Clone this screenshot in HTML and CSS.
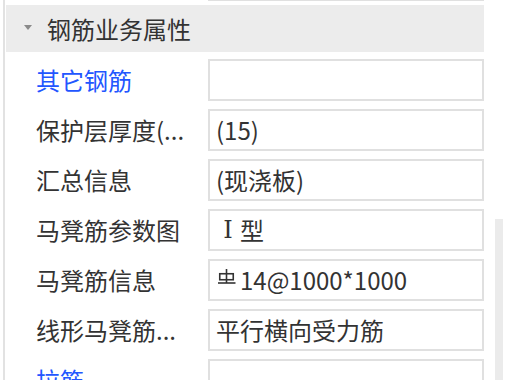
FILE: index.html
```html
<!DOCTYPE html>
<html lang="zh">
<head>
<meta charset="utf-8">
<link rel="stylesheet" href="styles.css">
</head>
<body>
<div class="frame">
  <div class="panel">
    <div class="list">
      <div class="row"><div class="label"></div><div class="field"></div></div>
      <div class="group"><span class="caret"></span><span class="group-title">钢筋业务属性</span></div>
      <div class="row"><div class="label blue">其它钢筋</div><div class="field"></div></div>
      <div class="row"><div class="label">保护层厚度(...</div><div class="field">(15)</div></div>
      <div class="row"><div class="label">汇总信息</div><div class="field">(现浇板)</div></div>
      <div class="row"><div class="label">马凳筋参数图</div><div class="field"><span class="roman">Ⅰ</span>型</div></div>
      <div class="row"><div class="label">马凳筋信息</div><div class="field"><svg class="steel" width="18" height="16" viewBox="0 0 18 16"><line x1="8.5" y1="0" x2="8.5" y2="14" /><rect x="1.75" y="4.75" width="13.5" height="6" fill="none"/><line x1="0" y1="14" x2="17.5" y2="14"/></svg>14@1000*1000</div></div>
      <div class="row"><div class="label">线形马凳筋...</div><div class="field">平行横向受力筋</div></div>
      <div class="row"><div class="label blue">拉筋</div><div class="field"></div></div>
    </div>
  </div>
  <div class="scroll"><div class="thumb"></div></div>
</div>
</body>
</html>
```
FILE: styles.css
```css
html, body {
  margin: 0;
  padding: 0;
  background: #ffffff;
  overflow: hidden;
}
body {
  width: 506px;
  height: 380px;
  font-family: "Noto Sans CJK SC", "Noto Sans", sans-serif;
  font-size: 24px;
  color: #333333;
}
.frame {
  display: flex;
  height: 380px;
  padding-left: 3px;
}
.panel {
  width: 479px;
  border-left: 2px solid #e2e2e2;
  padding-left: 1px;
  overflow: hidden;
}
.list {
  margin-top: -45px;
  width: 478px;
}
.row {
  display: grid;
  grid-template-columns: 202px 276px;
  height: 50px;
  align-items: center;
}
.label {
  padding-left: 30px;
  white-space: nowrap;
  line-height: 42px;
  overflow: hidden;
}
.label.blue {
  color: #2256ff;
}
.field {
  box-sizing: border-box;
  height: 42px;
  border: 2px solid #e0e0e0;
  padding-left: 6px;
  line-height: 38px;
  white-space: nowrap;
  display: flex;
  align-items: center;
}
.roman {
  display: inline-block;
  width: 24px;
  text-align: center;
  font-family: "DejaVu Serif", "DejaVu Sans", "Noto Sans CJK SC", serif;
  font-size: 24px;
}
.steel {
  stroke: #333333;
  stroke-width: 1.6;
  margin-right: 4px;
  margin-left: 2px;
  position: relative;
  top: -3px;
}
.group {
  height: 47px;
  margin-bottom: 3px;
  background: #ececec;
  display: flex;
  align-items: center;
  padding-left: 18px;
}
.caret {
  width: 0;
  height: 0;
  border-left: 4.5px solid transparent;
  border-right: 4.5px solid transparent;
  border-top: 5px solid #8a8a8a;
  margin-right: 15px;
  margin-top: -3px;
}
.group-title {
  line-height: 47px;
}
.scroll {
  width: 8px;
  margin-left: 10px;
}
.thumb {
  margin-top: 219px;
  height: 200px;
  background: #ebebeb;
}
```
